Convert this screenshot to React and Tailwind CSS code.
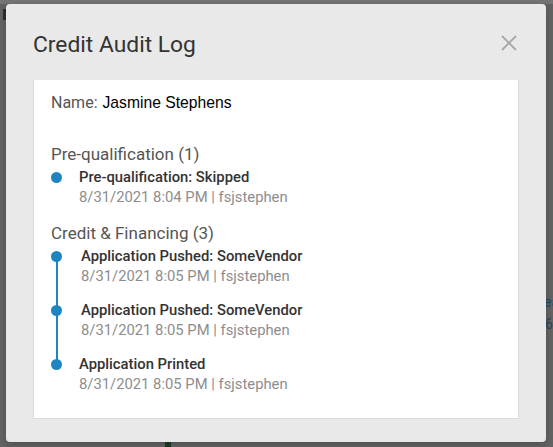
import React from "react";

function Item({ title, date, indent }) {
  return (
    <div className="flex">
      <div className={`${indent ? "w-[30px]" : "w-[28px]"} shrink-0 pt-[4.5px]`}>
        <div className="w-[11px] h-[11px] rounded-full bg-[#2084c1]" />
      </div>
      <div className="flex flex-col">
        <div className="text-[14.8px] leading-[20px] font-medium text-[#333333]">{title}</div>
        <div className="text-[14.8px] leading-[21px] text-[#8d8d8d]">{date}</div>
      </div>
    </div>
  );
}

export default function App() {
  return (
    <div className="relative w-[553px] h-[447px] overflow-hidden bg-[#626262] font-['Roboto',sans-serif]">
      {/* underlying page, dimmed */}
      <div className="h-[4px] bg-[#747474]" />
      <div className="absolute left-[3px] top-[9px] w-[3px] h-[11px] bg-[#2e2e2e]" />
      <div className="absolute left-[544px] top-[291px] flex flex-col text-[14px] leading-[22px] text-[#1e4a66]">
        <span>ea</span>
        <span className="pl-px">6</span>
      </div>
      <div className="absolute left-[165px] top-[442px] w-[6px] h-[5px] bg-[#1b3b22]" />

      {/* modal */}
      <div className="absolute left-[6px] top-[4px] w-[540px] h-[438px] rounded-[4px] bg-[#e9e9e9] shadow-[0_2px_6px_rgba(0,0,0,0.2)] flex flex-col px-[27px] pt-[27px]">
        <div className="flex items-start justify-between">
          <div className="h-[28px] text-[22.8px] leading-[28px] text-[#333333]">Credit Audit Log</div>
          <button className="mt-[4px] mr-[2px] w-[16px] h-[16px]">
            <svg width="16" height="16" viewBox="0 0 16 16" fill="none" stroke="#a8a8a8" strokeWidth="1.8">
              <path d="M1 1 L15 15 M15 1 L1 15" />
            </svg>
          </button>
        </div>

        <div className="mt-[21px] w-[486px] h-[339px] bg-white border-l border-r border-b border-[#dadada] pl-[17px] pt-[13px] flex flex-col">
          <div className="text-[16px] leading-[20px] text-[#555555]">
            Name:<span className="ml-[5px] text-black font-['Liberation_Sans',Arial,sans-serif] text-[15.7px]">Jasmine Stephens</span>
          </div>

          <div className="mt-[31px] text-[17px] leading-[20px] text-[#555555]">Pre-qualification (1)</div>
          <div className="mt-[3px] flex flex-col">
            <Item title="Pre-qualification: Skipped" date="8/31/2021 8:04 PM | fsjstephen" />
          </div>

          <div className="mt-[15px] text-[17px] leading-[20px] text-[#555555]">Credit &amp; Financing (3)</div>
          <div className="relative mt-[3px] flex flex-col gap-[13px]">
            <span className="absolute left-[5px] top-[10px] bottom-[31px] w-[2px] bg-[#2084c1]" />
            <Item indent title="Application Pushed: SomeVendor" date="8/31/2021 8:05 PM | fsjstephen" />
            <Item indent title="Application Pushed: SomeVendor" date="8/31/2021 8:05 PM | fsjstephen" />
            <Item title="Application Printed" date="8/31/2021 8:05 PM | fsjstephen" />
          </div>
        </div>
      </div>
    </div>
  );
}
